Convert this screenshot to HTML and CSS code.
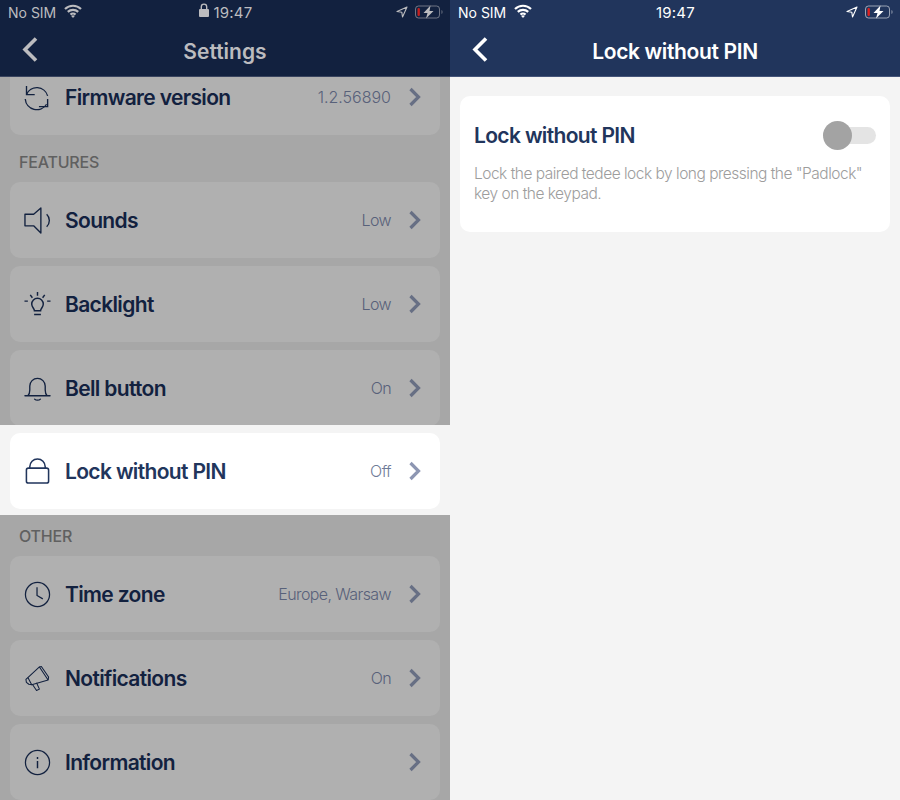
FILE: index.html
```html
<!DOCTYPE html>
<html lang="en">
<head>
    <meta charset="UTF-8">
    <meta name="viewport" content="width=device-width, initial-scale=1.0">
    <title>Lock without PIN</title>
    <link rel="stylesheet" href="styles.css">
</head>
<body>

<div class="screens">

    <!-- settings, dimmed behind the highlighted row -->
    <section class="pane pane-dim">
        <header class="topbar">
            <div class="status">
                <div class="status-left">
                    <span class="carrier">No SIM</span>
                    <svg class="wifi" viewBox="0 0 18 14"><path d="M1 5a11.500 11.500 0 0 1 16 0M3.800 7.900a7.500 7.500 0 0 1 10.400 0M6.500 10.600a3.600 3.600 0 0 1 5 0" fill="none" stroke="currentColor" stroke-width="2.200"/><path d="M9 14l-1.800-2a2.600 2.600 0 0 1 3.600 0z" fill="currentColor"/></svg>
                </div>
                <div class="status-mid">
                    <svg class="padlock" viewBox="0 0 10 14"><path d="M2.300 7V3.800a2.700 2.700 0 0 1 5.400 0V7" fill="none" stroke="currentColor" stroke-width="1.400"/><rect x="0" y="6" width="10" height="8" rx="1" fill="currentColor"/></svg>
                    <span>19:47</span>
                </div>
                <div class="status-right">
                    <svg class="gps" viewBox="0 0 12 12"><path d="M11 1L1 5.500l4.800.7.7 4.800z" fill="none" stroke="currentColor" stroke-width="1.100" stroke-linejoin="round"/></svg>
                    <svg class="battery" viewBox="0 0 28 14"><rect x="0.500" y="1" width="24" height="12" rx="3" fill="none" stroke="currentColor" stroke-opacity=".55"/><rect x="2.500" y="3" width="2.400" height="8" rx="1" fill="#c4201f"/><path d="M15.500 0.500L8.500 8h4l-1.500 5.500L18.500 6h-4z" fill="currentColor"/><path d="M26.500 5v4a2 2 0 0 0 1-2 2 2 0 0 0-1-2z" fill="currentColor" fill-opacity=".55"/></svg>
                </div>
            </div>
            <div class="nav">
                <svg class="back" viewBox="0 0 16 25"><path d="M14 1.500L3 12.500l11 11" fill="none" stroke="currentColor" stroke-width="3.600"/></svg>
                <h1>Settings</h1>
            </div>
        </header>

        <div class="list">
            <div class="row row-first">
                <svg class="icon" viewBox="0 0 28 28"><path d="M2.600 11A11.600 11.600 0 0 1 24.500 12.300M1.300 15.500A12 12 0 0 0 23.400 21" fill="none" stroke="currentColor" stroke-width="1.400"/><path d="M2.600 2v9h8.500M24.500 15.500v8h-9" fill="none" stroke="currentColor" stroke-width="1.400"/></svg>
                <span class="name">Firmware version</span>
                <span class="value value-num">1.2.56890</span>
                <svg class="chev" viewBox="0 0 14 20"><path d="M2.500 2l8 8-8 8" fill="none" stroke="currentColor" stroke-width="3.200"/></svg>
            </div>

            <div class="group-label group-features">FEATURES</div>
            <div class="row">
                <svg class="icon" viewBox="0 0 28 28"><path d="M1 7.500h9L17.500 1v26L10 19.500H1z" fill="none" stroke="currentColor" stroke-width="1.400" stroke-linejoin="round"/><path d="M23.500 7.500a9 9 0 0 1 0 13" fill="none" stroke="currentColor" stroke-width="1.400"/></svg>
                <span class="name">Sounds</span>
                <span class="value">Low</span>
                <svg class="chev" viewBox="0 0 14 20"><path d="M2.500 2l8 8-8 8" fill="none" stroke="currentColor" stroke-width="3.200"/></svg>
            </div>
            <div class="row">
                <svg class="icon" viewBox="0 0 28 28"><path d="M10.800 20.500c0-2.500-2.800-3.500-2.800-7a6 6 0 0 1 12 0c0 3.500-2.800 4.500-2.800 7z" fill="none" stroke="currentColor" stroke-width="1.500"/><path d="M10.500 24.300h7M14 1v4M6.500 4l2.200 3M21.500 4l-2.200 3M.5 10.500h3.500M24 10.500h3.500" fill="none" stroke="currentColor" stroke-width="1.500"/></svg>
                <span class="name">Backlight</span>
                <span class="value">Low</span>
                <svg class="chev" viewBox="0 0 14 20"><path d="M2.500 2l8 8-8 8" fill="none" stroke="currentColor" stroke-width="3.200"/></svg>
            </div>
            <div class="row">
                <svg class="icon" viewBox="0 0 28 28"><path d="M1 21.500h26M4 21.500c1.500-1.500 2-3 2-6v-4a8 8 0 0 1 16 0v4c0 3 .5 4.500 2 6" fill="none" stroke="currentColor" stroke-width="1.400" stroke-linecap="round"/><path d="M11 25c1.500 1.500 4.500 1.500 6 0" fill="none" stroke="currentColor" stroke-width="1.400" stroke-linecap="round"/></svg>
                <span class="name">Bell button</span>
                <span class="value">On</span>
                <svg class="chev" viewBox="0 0 14 20"><path d="M2.500 2l8 8-8 8" fill="none" stroke="currentColor" stroke-width="3.200"/></svg>
            </div>

            <div class="highlight">
                <div class="row row-on">
                    <svg class="icon" viewBox="0 0 28 28"><rect x="2.500" y="10.500" width="23" height="15.500" rx="2" fill="none" stroke="currentColor" stroke-width="1.600"/><path d="M6 10.500V9a8 8 0 0 1 16 0v1.500" fill="none" stroke="currentColor" stroke-width="1.600"/></svg>
                    <span class="name">Lock without PIN</span>
                    <span class="value">Off</span>
                    <svg class="chev" viewBox="0 0 14 20"><path d="M2.500 2l8 8-8 8" fill="none" stroke="currentColor" stroke-width="3.200"/></svg>
                </div>
            </div>

            <div class="group-label group-other">OTHER</div>
            <div class="row">
                <svg class="icon" viewBox="0 0 28 28"><circle cx="14" cy="14" r="12.500" fill="none" stroke="currentColor" stroke-width="1.300"/><path d="M13.500 6.500v8.500l6 3.500" fill="none" stroke="currentColor" stroke-width="1.300"/></svg>
                <span class="name">Time zone</span>
                <span class="value">Europe, Warsaw</span>
                <svg class="chev" viewBox="0 0 14 20"><path d="M2.500 2l8 8-8 8" fill="none" stroke="currentColor" stroke-width="3.200"/></svg>
            </div>
            <div class="row">
                <svg class="icon" viewBox="0 0 28 28"><path d="M16 2L4 13l4 7.500 17-5z" fill="none" stroke="currentColor" stroke-width="1.100" stroke-linejoin="round"/><path d="M16 2l2-.5 7.500 11-.5 3M4 13l-2 2 .5 3 2.500 2 3 .5M9 20.500l4 6 3-1.500-3-6.500" fill="none" stroke="currentColor" stroke-width="1.100" stroke-linejoin="round"/></svg>
                <span class="name">Notifications</span>
                <span class="value">On</span>
                <svg class="chev" viewBox="0 0 14 20"><path d="M2.500 2l8 8-8 8" fill="none" stroke="currentColor" stroke-width="3.200"/></svg>
            </div>
            <div class="row">
                <svg class="icon" viewBox="0 0 28 28"><circle cx="14" cy="14" r="12.500" fill="none" stroke="currentColor" stroke-width="1.300"/><path d="M14 12.500v7.500M14 8.300v2" fill="none" stroke="currentColor" stroke-width="1.500"/></svg>
                <span class="name">Information</span>
                <svg class="chev" viewBox="0 0 14 20"><path d="M2.500 2l8 8-8 8" fill="none" stroke="currentColor" stroke-width="3.200"/></svg>
            </div>
        </div>
    </section>

    <!-- lock without pin detail -->
    <section class="pane pane-detail">
        <header class="topbar">
            <div class="status">
                <div class="status-left">
                    <span class="carrier">No SIM</span>
                    <svg class="wifi" viewBox="0 0 18 14"><path d="M1 5a11.500 11.500 0 0 1 16 0M3.800 7.900a7.500 7.500 0 0 1 10.400 0M6.500 10.600a3.600 3.600 0 0 1 5 0" fill="none" stroke="currentColor" stroke-width="2.200"/><path d="M9 14l-1.800-2a2.600 2.600 0 0 1 3.600 0z" fill="currentColor"/></svg>
                </div>
                <div class="status-mid">
                    <span>19:47</span>
                </div>
                <div class="status-right">
                    <svg class="gps" viewBox="0 0 12 12"><path d="M11 1L1 5.500l4.800.7.7 4.800z" fill="none" stroke="currentColor" stroke-width="1.100" stroke-linejoin="round"/></svg>
                    <svg class="battery" viewBox="0 0 28 14"><rect x="0.500" y="1" width="24" height="12" rx="3" fill="none" stroke="currentColor" stroke-opacity=".55"/><rect x="2.500" y="3" width="2.400" height="8" rx="1" fill="#e0211f"/><path d="M15.500 0.500L8.500 8h4l-1.500 5.500L18.500 6h-4z" fill="currentColor"/><path d="M26.500 5v4a2 2 0 0 0 1-2 2 2 0 0 0-1-2z" fill="currentColor" fill-opacity=".55"/></svg>
                </div>
            </div>
            <div class="nav">
                <svg class="back" viewBox="0 0 16 25"><path d="M14 1.500L3 12.500l11 11" fill="none" stroke="currentColor" stroke-width="3.600"/></svg>
                <h1>Lock without PIN</h1>
            </div>
        </header>

        <div class="detail">
            <div class="card">
                <div class="card-head">
                    <h2>Lock without PIN</h2>
                    <div class="toggle"><div class="knob"></div></div>
                </div>
                <p>Lock the paired tedee lock by long pressing the "Padlock" key on the keypad.</p>
            </div>
        </div>
    </section>

</div>

</body>
</html>
```

FILE: styles.css
```css
body {
    margin: 0;
    font-family: Inter, "Noto Sans", sans-serif;
}
h1, h2, p {
    margin: 0;
}
.screens {
    display: flex;
    width: 900px;
    height: 800px;
    overflow: hidden;
}
.pane {
    width: 450px;
    height: 800px;
    display: flex;
    flex-direction: column;
    overflow: hidden;
}
.pane-dim {
    background: #a7a7a7;
}
.pane-detail {
    background: #f4f4f4;
}

/* top bar */
.topbar {
    flex: none;
    height: 77px;
    box-sizing: border-box;
    border-bottom: 1px solid #45557a;
    position: relative;
    z-index: 1;
}
.pane-dim .topbar {
    background: #12213f;
    color: #bcbcbf;
    border-bottom-color: #39445f;
}
.pane-detail .topbar {
    background: #21355c;
    color: #fff;
}
.status {
    height: 24px;
    display: grid;
    grid-template-columns: 1fr auto 1fr;
    align-items: center;
    padding: 0 7px 0 8px;
    font-size: 15px;
    letter-spacing: 0.2px;
}
.status-left {
    display: flex;
    align-items: center;
    gap: 8px;
}
.carrier {
    font-size: 14px;
    letter-spacing: 0;
}
.status-mid {
    display: flex;
    align-items: center;
    gap: 5px;
}
.status-right {
    display: flex;
    align-items: center;
    justify-content: flex-end;
    gap: 7px;
}
.wifi {
    width: 18px;
    height: 14px;
    margin-top: -3px;
}
.padlock {
    width: 10px;
    height: 14px;
    margin-top: -4px;
}
.gps {
    width: 12px;
    height: 12px;
}
.battery {
    width: 28px;
    height: 14px;
}
.nav {
    height: 52px;
    display: flex;
    align-items: center;
    justify-content: center;
    position: relative;
}
.nav h1 {
    font-size: 21px;
    font-weight: 600;
    margin-top: 2px;
}
.pane-detail .nav h1 {
    letter-spacing: -0.35px;
}
.back {
    position: absolute;
    left: 22px;
    top: 13px;
    width: 16px;
    height: 25px;
}

/* settings list */
.list {
    flex: 1;
    overflow: hidden;
    margin-top: -18px;
}
.row {
    height: 76px;
    box-sizing: border-box;
    margin: 0 10px 8px;
    padding: 0 18px 0 14px;
    display: flex;
    align-items: center;
    border-radius: 10px;
    background: #b0b0b0;
    color: #12213f;
}
.row-first {
    margin-bottom: 0;
}
.row-on {
    background: #fff;
    color: #21355c;
    margin: 0;
}
.highlight {
    background: #f4f4f4;
    margin-top: -9px;
    padding: 8px 10px 6px;
    position: relative;
}
.icon {
    width: 27px;
    height: 27px;
    flex: none;
    margin-right: 14px;
}
.name {
    flex: 1;
    font-size: 21px;
    font-weight: 600;
    letter-spacing: -0.65px;
}
.value {
    font-size: 16px;
    font-weight: 300;
    letter-spacing: -0.6px;
    color: #58617a;
    margin-right: 17px;
}
.value-num {
    letter-spacing: 0;
}
.row-on .value {
    color: #6f7b98;
}
.chev {
    width: 14px;
    height: 20px;
    flex: none;
    color: #676f84;
}
.row-on .chev {
    color: #8d96b2;
}
.group-label {
    font-size: 16px;
    line-height: 20px;
    font-weight: 500;
    letter-spacing: -0.2px;
    color: #606060;
    margin: 0 19px 10px;
}
.group-features {
    padding-top: 17px;
}
.group-other {
    padding-top: 11px;
}

/* detail card */
.detail {
    padding: 19px 10px;
}
.card {
    height: 136px;
    box-sizing: border-box;
    padding: 21px 14px 0;
    background: #fff;
    border-radius: 10px;
}
.card-head {
    display: flex;
    justify-content: space-between;
    align-items: center;
    height: 36px;
}
.card-head h2 {
    font-size: 21px;
    font-weight: 600;
    letter-spacing: -0.65px;
    color: #21355c;
}
.toggle {
    width: 50px;
    height: 17px;
    border-radius: 9px;
    background: #e4e4e4;
    position: relative;
}
.knob {
    position: absolute;
    left: -3px;
    top: -6px;
    width: 29px;
    height: 29px;
    border-radius: 50%;
    background: #a3a3a3;
}
.card p {
    margin-top: 11px;
    font-size: 15.5px;
    line-height: 20px;
    font-weight: 300;
    letter-spacing: -0.5px;
    color: #9d9d9d;
}
```
